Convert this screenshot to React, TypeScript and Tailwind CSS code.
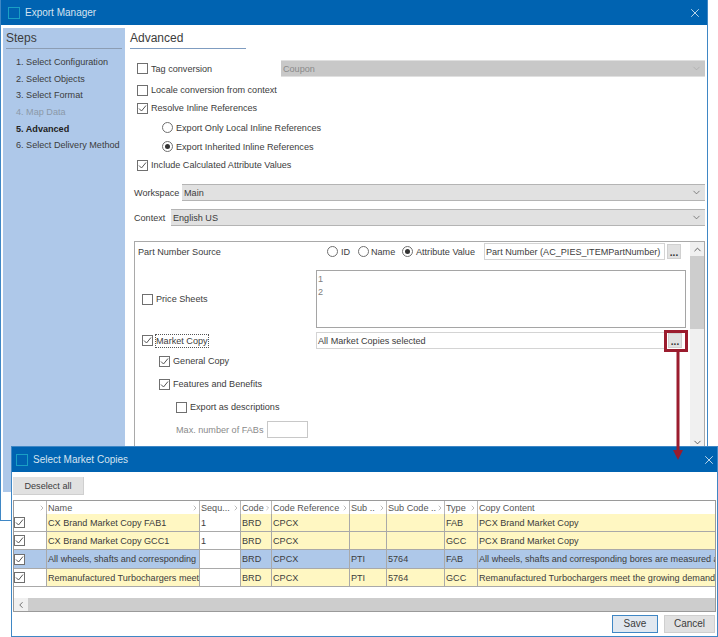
import React from 'react';
import { ChevronDown, ChevronUp, ChevronLeft, ChevronRight, X } from 'lucide-react';

const Checkbox = ({ checked = false }: { checked?: boolean }) => (
  <span className="flex h-[11px] w-[11px] shrink-0 items-center justify-center border border-[#6f6f6f] bg-white">
    {checked && (
      <svg width="9" height="9" viewBox="0 0 9 9" fill="none">
        <path d="M1 4.5 L3.5 7 L8 1.5" stroke="#555" strokeWidth="1" />
      </svg>
    )}
  </span>
);

const Radio = ({ checked = false }: { checked?: boolean }) => (
  <span className="flex h-[11px] w-[11px] shrink-0 items-center justify-center rounded-full border border-[#6f6f6f] bg-white">
    {checked && <span className="h-[5px] w-[5px] rounded-full bg-[#333]" />}
  </span>
);

const Check = ({ label, checked, className = '' }: { label: string; checked?: boolean; className?: string }) => (
  <div className={`flex items-center gap-[3px] whitespace-nowrap ${className}`}>
    <Checkbox checked={checked} />
    <span>{label}</span>
  </div>
);

const Select = ({ value, disabled }: { value: string; disabled?: boolean }) => (
  <div className={`flex h-[17px] flex-1 items-center justify-between border-b border-t pl-[2px] pr-[3px] ${disabled ? 'border-[#e0e0e0] bg-[#c8c8c8] text-[#8a8a8a]' : 'border-[#b4b4b4] bg-[#e1e1e1]'}`}>
    <span>{value}</span>
    <ChevronDown size={11} strokeWidth={1.5} className={disabled ? 'text-[#a8a8a8]' : 'text-[#555]'} />
  </div>
);

const DotsButton = () => (
  <div className="flex h-[15px] w-[14px] shrink-0 items-end justify-center border border-[#d0d0d0] bg-[#e1e1e1] pb-[1px] text-[10px] font-bold leading-[9px] text-[#333]">
    ...
  </div>
);

const WindowIcon = () => <span className="h-[12px] w-[12px] shrink-0 border border-[#1a9fc4]" />;

const columns = [
  { label: '', width: 'w-[33px]' },
  { label: 'Name', width: 'w-[153px]' },
  { label: 'Sequ...', width: 'w-[41px]' },
  { label: 'Code', width: 'w-[31px]' },
  { label: 'Code Reference', width: 'w-[78px]' },
  { label: 'Sub ..', width: 'w-[37px]' },
  { label: 'Sub Code ..', width: 'w-[58px]' },
  { label: 'Type', width: 'w-[33px]' },
  { label: 'Copy Content', width: 'flex-1' },
];

const rows = [
  { name: 'CX Brand Market Copy FAB1', seq: '1', sub: '', subCode: '', type: 'FAB', content: 'PCX Brand Market Copy', height: 'h-[18px]' },
  { name: 'CX Brand Market Copy GCC1', seq: '1', sub: '', subCode: '', type: 'GCC', content: 'PCX Brand Market Copy', height: 'h-[18px]' },
  { name: 'All wheels, shafts and corresponding', seq: '', sub: 'PTI', subCode: '5764', type: 'FAB', content: 'All wheels, shafts and corresponding bores are measured a', height: 'h-[19px]', selected: true },
  { name: 'Remanufactured Turbochargers meet', seq: '', sub: 'PTI', subCode: '5764', type: 'GCC', content: 'Remanufactured Turbochargers meet the growing demand', height: 'h-[18px]' },
];

const steps = ['1. Select Configuration', '2. Select Objects', '3. Select Format', '4. Map Data', '5. Advanced', '6. Select Delivery Method'];

export default function App() {
  return (
    <div className="relative h-[637px] w-[718px] overflow-hidden bg-white font-['Liberation_Sans',sans-serif] text-[9.1px] leading-[12px] text-[#3c3c3c]">
      {/* Export Manager window */}
      <div className="flex h-[521px] w-[708px] flex-col border-b border-l border-r border-[#3f87c5]">
        <div className="flex h-[25px] shrink-0 items-center bg-[#0063b1] pl-[7px] pr-[5px] text-[10px] text-[#d5e3f0]">
          <WindowIcon />
          <span className="ml-[5px] flex-1">Export Manager</span>
          <X size={14} strokeWidth={1.25} className="text-white" />
        </div>

        <div className="flex flex-1 pt-[3px]">
          <div className="ml-[2px] h-[464px] w-[122px] shrink-0 bg-[#aec8e9] px-[3px]">
            <div className="flex h-[21px] items-center border-b border-[#8c9db3] text-[12px]">Steps</div>
            <div className="mt-[5px] flex flex-col pl-[10px]">
              {steps.map((step) => (
                <div
                  key={step}
                  className={`flex h-[16.6px] items-center whitespace-nowrap ${step === '5. Advanced' ? 'font-bold text-[#222]' : step === '4. Map Data' ? 'text-[#8b98a8]' : ''}`}
                >
                  {step}
                </div>
              ))}
            </div>
          </div>

          <div className="flex w-[580px] flex-col pl-[5px]">
            <div className="flex h-[21px] w-[116px] items-center border-b border-[#7f9cc0] text-[12px]">Advanced</div>

            <div className="ml-[7px] mt-[11px] flex h-[17px] items-center">
              <Check label="Tag conversion" className="w-[144px]" />
              <Select value="Coupon" disabled />
            </div>
            <Check label="Locale conversion from context" className="ml-[7px] mt-[4px] h-[18px]" />
            <Check label="Resolve Inline References" checked className="ml-[7px] h-[18px]" />
            <div className="ml-[32px] mt-[1px] flex h-[19px] items-center gap-[3px]">
              <Radio />
              <span>Export Only Local Inline References</span>
            </div>
            <div className="ml-[32px] flex h-[19px] items-center gap-[3px]">
              <Radio checked />
              <span>Export Inherited Inline References</span>
            </div>
            <Check label="Include Calculated Attribute Values" checked className="ml-[7px] h-[18px]" />

            <div className="ml-[4px] mt-[10px] flex items-center">
              <span className="w-[48px]">Workspace</span>
              <Select value="Main" />
            </div>
            <div className="ml-[4px] mt-[8px] flex items-center">
              <span className="w-[37px]">Context</span>
              <Select value="English US" />
            </div>

            <div className="ml-[4px] mt-[15px] flex h-[208px] border border-[#a9a9a9]">
              <div className="relative w-[555px] shrink-0 pl-[3px]">
                <div className="mt-[1px] flex h-[17px] items-center">
                  <span className="w-[189px]">Part Number Source</span>
                  <Radio />
                  <span className="ml-[3px] w-[17px]">ID</span>
                  <Radio />
                  <span className="ml-[2px] w-[31px]">Name</span>
                  <Radio checked />
                  <span className="ml-[3px] w-[68px]">Attribute Value</span>
                  <span className="flex h-[17px] w-[181px] items-center whitespace-nowrap border border-[#d4d4d4] pl-[1px]">Part Number (AC_PIES_ITEMPartNumber)</span>
                  <span className="ml-[2px]"><DotsButton /></span>
                </div>

                <div className="mt-[10px] flex">
                  <div className="flex w-[178px] items-center pl-[4px]">
                    <Check label="Price Sheets" />
                  </div>
                  <div className="h-[58px] w-[370px] border border-[#a5a5a5] pl-[1px] pt-[2px] text-[#808080]">
                    <div className="h-[13px]">1</div>
                    <div>2</div>
                  </div>
                </div>

                <div className="mt-[4px] flex items-center">
                  <div className="flex w-[178px] items-center gap-[3px] pl-[4px]">
                    <Checkbox checked />
                    <span className="outline-1 outline-dotted outline-[#555]">Market Copy</span>
                  </div>
                  <span className="flex h-[17px] w-[349px] items-center border border-[#d4d4d4] pl-[1px]">All Market Copies selected</span>
                  <span className="ml-[3px]"><DotsButton /></span>
                </div>

                <Check label="General Copy" checked className="ml-[21px] mt-[5px] h-[14px]" />
                <Check label="Features and Benefits" checked className="ml-[21px] mt-[9px] h-[14px]" />
                <Check label="Export as descriptions" className="ml-[38px] mt-[9px] h-[14px]" />
                <div className="ml-[38px] mt-[7px] flex h-[17px] items-center whitespace-nowrap text-[#8a8a8a]">
                  <span className="w-[91px]">Max. number of FABs</span>
                  <span className="h-[17px] w-[41px] border border-[#c8c8c8]" />
                </div>
              </div>

              <div className="ml-auto flex w-[14px] flex-col items-center bg-[#f0f0f0]">
                <ChevronUp size={11} strokeWidth={2} className="mt-[2px] h-[11px] text-[#555]" />
                <div className="mt-[1px] h-[73px] w-full bg-[#cdcdcd]" />
                <ChevronDown size={11} strokeWidth={2} className="mt-auto text-[#555]" />
              </div>
            </div>
          </div>
        </div>
      </div>

      {/* Callout from the ... button to the dialog */}
      <div className="absolute left-[664px] top-[330px] h-[22px] w-[24px] border-[3px] border-[#9b1c2e]" />
      <svg className="absolute left-[672px] top-[352px] z-20" width="12" height="110" viewBox="0 0 12 110" fill="none">
        <path d="M6 0 V100" stroke="#9b1c2e" strokeWidth="3" />
        <path d="M1 98 H11 L6 108 Z" fill="#9b1c2e" />
      </svg>

      {/* Select Market Copies dialog */}
      <div className="absolute left-[11px] top-[446px] z-10 flex h-[191px] w-[707px] flex-col border border-[#3f87c5] bg-white">
        <div className="flex h-[25px] shrink-0 items-center bg-[#0063b1] pl-[4px] pr-[1px] text-[10px] text-[#d5e3f0]">
          <WindowIcon />
          <span className="ml-[5px] flex-1">Select Market Copies</span>
          <X size={14} strokeWidth={1.25} className="text-white" />
        </div>

        <div className="ml-[1px] mt-[5px] flex h-[18px] w-[71px] items-center justify-center border-b border-r border-[#cfcfcf] bg-[#e1e1e1]">
          Deselect all
        </div>

        <div className="ml-[1px] mt-[5px] flex h-[112px] w-[703px] flex-col border border-[#9a9a9a]">
          <div className="flex h-[13px] shrink-0">
            {columns.map((col) => (
              <div key={col.label} className={`flex items-center justify-between whitespace-nowrap border-r border-[#b8b8b8] pl-[1px] last:border-r-0 ${col.width}`}>
                <span className="text-[#555]">{col.label}</span>
                {col.label !== 'Copy Content' && <ChevronRight size={8} strokeWidth={1.5} className="text-[#777]" />}
              </div>
            ))}
          </div>
          {rows.map((row) => {
            const cell = `flex items-center overflow-hidden whitespace-nowrap border-r border-[#a9a9a9] pl-[1px] ${row.selected ? 'bg-[#aec8e9]' : 'bg-[#fff7c2]'}`;
            return (
              <div key={row.name} className={`flex shrink-0 border-b border-[#a9a9a9] ${row.height}`}>
                <div className={`flex w-[33px] items-center border-r border-[#a9a9a9] ${row.selected ? 'bg-[#aec8e9]' : 'bg-white'}`}>
                  <Checkbox checked />
                </div>
                <div className={`${cell} w-[153px]`}>{row.name}</div>
                <div className="flex w-[41px] items-center border-r border-[#a9a9a9] bg-white pl-[1px]">{row.seq}</div>
                <div className={`${cell} w-[31px]`}>BRD</div>
                <div className={`${cell} w-[78px]`}>CPCX</div>
                <div className={`${cell} w-[37px]`}>{row.sub}</div>
                <div className={`${cell} w-[58px]`}>{row.subCode}</div>
                <div className={`${cell} w-[33px]`}>{row.type}</div>
                <div className={`${cell} flex-1 border-r-0`}>{row.content}</div>
              </div>
            );
          })}
          <div className="mt-auto flex h-[13px] shrink-0 bg-[#cdcdcd]">
            <div className="flex w-[14px] items-center justify-center bg-[#f0f0f0]">
              <ChevronLeft size={10} strokeWidth={2} className="text-[#555]" />
            </div>
          </div>
        </div>

        <div className="mt-[3px] flex justify-end gap-[6px] pr-[2px]">
          <div className="flex h-[18px] w-[46px] items-center justify-center border border-[#3f87c5] bg-[#e1e8f0] text-[10px]">Save</div>
          <div className="flex h-[18px] w-[51px] items-center justify-center border border-[#cfcfcf] bg-[#e1e1e1] text-[10px]">Cancel</div>
        </div>
      </div>
    </div>
  );
}
